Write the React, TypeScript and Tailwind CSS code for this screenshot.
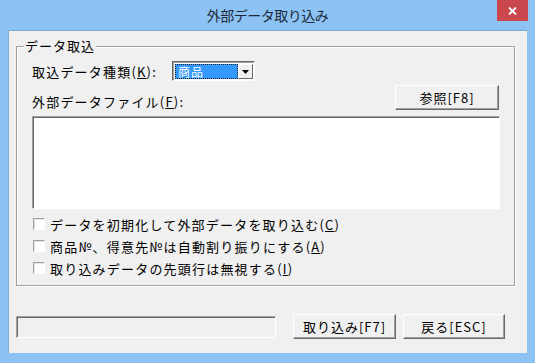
import React from "react";

const font = { fontFamily: '"Noto Sans CJK JP", "Noto Sans", sans-serif' };

function Btn({ children, w }: { children: React.ReactNode; w: string }) {
  return (
    <div
      className={`${w} h-[25px] flex items-center justify-center bg-[#f0f0f0] border border-t-white border-l-white border-r-[#696969] border-b-[#696969] shadow-[inset_-1px_-1px_0_#a0a0a0] text-[13px] tracking-[1px] text-black leading-none`}
    >
      {children}
    </div>
  );
}

function Check({ children }: { children: React.ReactNode }) {
  return (
    <div className="h-[22px] flex items-center">
      <div className="ml-[1px] w-[12px] h-[12px] bg-white border border-t-[#a0a0a0] border-l-[#a0a0a0] border-r-white border-b-white shadow-[inset_1px_1px_0_#e3e3e3]" />
      <span className="ml-[5px] text-[13px] tracking-[1.2px] leading-none text-black">{children}</span>
    </div>
  );
}

export default function App() {
  return (
    <div style={font} className="w-[535px] h-[363px] bg-[#8cc3f4] flex flex-col">
      <div className="relative h-[30px] flex items-center justify-center">
        <span className="text-[14px] tracking-[-0.5px] text-[#1e2a3a] mt-[1px]">外部データ取り込み</span>
        <div className="absolute top-0 right-[7px] w-[31px] h-[21px] bg-[#c9474d] flex items-center justify-center">
          <svg width="9" height="8" viewBox="0 0 9 8">
            <path d="M1 0.5 L8 7.5 M8 0.5 L1 7.5" stroke="white" strokeWidth="1.8" />
          </svg>
        </div>
      </div>
      <div className="mx-[8px] h-[323px] bg-[#f0f0f0] border-t border-l border-[#7fa9cf] flex flex-col">
        <div className="relative mt-[15px] ml-[7px] w-[499px] h-[240px] border border-[#a0a0a0] shadow-[inset_1px_1px_0_white,1px_1px_0_white] px-[15px]">
          <div className="absolute -top-[9px] left-[7px] bg-[#f0f0f0] px-[1px] text-[13px] tracking-[1px] leading-[16px] text-black">
            データ取込
          </div>
          <div className="mt-[14px] flex items-center h-[20px]">
            <span className="text-[13px] tracking-[1.2px] leading-none text-black">
              取込データ種類(<u>K</u>):
            </span>
            <div className="ml-[15px] w-[83px] h-[20px] bg-white border border-t-[#696969] border-l-[#696969] border-r-white border-b-white shadow-[inset_1px_1px_0_#a0a0a0] flex items-stretch p-[1px] pl-[2px] pt-[2px]">
              <div className="flex-1 h-[15px] bg-[#3399ff] border border-dotted border-[#222] pl-[2px] text-[12px] tracking-[1px] leading-[13px] text-white">
                商品
              </div>
              <div className="w-[15px] bg-[#f0f0f0] border border-t-white border-l-white border-r-[#696969] border-b-[#696969] flex items-center justify-center">
                <svg width="7" height="4" viewBox="0 0 7 4">
                  <path d="M0 0 H7 L3.5 4 Z" fill="black" />
                </svg>
              </div>
            </div>
          </div>
          <div className="mt-[4px] flex items-end justify-between">
            <span className="mb-[2px] text-[13px] tracking-[1.2px] leading-none text-black">
              外部データファイル(<u>F</u>):
            </span>
            <Btn w="w-[104px]">参照[F8]</Btn>
          </div>
          <div className="mt-[6px] w-[468px] h-[93px] bg-white border border-t-[#a0a0a0] border-l-[#a0a0a0] border-r-white border-b-white shadow-[inset_1px_1px_0_#696969]" />
          <div className="mt-[4px] flex flex-col">
            <Check>
              データを初期化して外部データを取り込む(<u>C</u>)
            </Check>
            <Check>
              商品№、得意先№は自動割り振りにする(<u>A</u>)
            </Check>
            <Check>
              取り込みデータの先頭行は無視する(<u>I</u>)
            </Check>
          </div>
        </div>
        <div className="mt-[28px] ml-[7px] flex items-center">
          <div className="w-[260px] h-[22px] border border-t-[#a0a0a0] border-l-[#a0a0a0] border-r-white border-b-white shadow-[inset_1px_1px_0_#696969]" />
          <div className="ml-[17px]">
            <Btn w="w-[103px]">取り込み[F7]</Btn>
          </div>
          <div className="ml-[7px]">
            <Btn w="w-[102px]">戻る[ESC]</Btn>
          </div>
        </div>
      </div>
    </div>
  );
}
